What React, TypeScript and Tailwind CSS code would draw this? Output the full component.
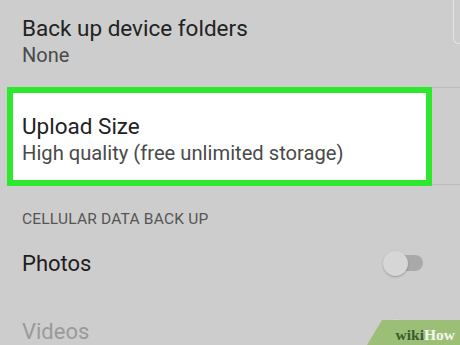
import React from 'react';

const Toggle: React.FC = () => (
  <div className="relative flex h-[25px] w-[40px] items-center">
    <div className="ml-[6px] h-[16px] w-[34px] rounded-full bg-[#a9a9a9]" />
    <div className="absolute left-0 top-0 h-[25px] w-[25px] rounded-full bg-[#d6d6d6] shadow-[0_1px_2px_rgba(0,0,0,0.25)]" />
  </div>
);

const WikiHowMark: React.FC = () => (
  <div className="absolute bottom-0 right-0 h-[25px] w-[93px]">
    <svg className="absolute inset-0" width="93" height="25" viewBox="0 0 93 25">
      <polygon points="15,0 93,0 93,25 0,25" fill="#9cbf78" />
    </svg>
    <span
      className="absolute bottom-[3px] right-[5px] text-[15.5px] font-bold leading-none"
      style={{ fontFamily: '"Liberation Serif", "DejaVu Serif", serif' }}
    >
      <span className="text-[#3e5b2c]">wiki</span>
      <span className="text-[#f2f6ee]">How</span>
    </span>
  </div>
);

export default function App() {
  return (
    <div
      className="relative h-[345px] w-[460px] overflow-hidden bg-[#cdcdcd]"
      style={{ fontFamily: 'Roboto, "Noto Sans", sans-serif' }}
    >
      {/* edge of the panel at top right */}
      <div className="absolute right-[-20px] top-[-10px] h-[54px] w-[27px] rounded-bl-[6px] border-b border-l border-[#e4e4e4]" />

      <div className="flex h-[87px] flex-col pl-[22px] pt-[14px]">
        <div className="text-[22.5px] leading-[28px] text-[#222]">Back up device folders</div>
        <div className="text-[20px] leading-[26px] text-[#4a4a4a]">None</div>
      </div>

      <div className="flex">
        <div className="ml-[7px] flex h-[99px] w-[425px] flex-col border-[6px] border-[#2ee82e] bg-white pl-[9px] pt-[19px]">
          <div className="text-[22.5px] leading-[28px] text-[#222]">Upload Size</div>
          <div className="text-[20.2px] leading-[26px] text-[#4a4a4a]">High quality (free unlimited storage)</div>
        </div>
        <div className="flex flex-1 flex-col justify-between">
          <div className="h-px bg-[#bcbcbc]" />
          <div className="mb-[1px] h-px bg-[#bcbcbc]" />
        </div>
      </div>

      <div className="pl-[22px] pt-[24px] text-[15.5px] leading-[18px] tracking-[0.2px] text-[#555]">
        CELLULAR DATA BACK UP
      </div>

      <div className="flex h-[70px] items-center justify-between pl-[22px] pr-[37px]">
        <div className="text-[22px] text-[#1e1e1e]">Photos</div>
        <Toggle />
      </div>

      <div className="flex h-[66px] items-center justify-between pl-[22px] pr-[37px]">
        <div className="text-[22px] text-[#9a9a9a]">Videos</div>
        <Toggle />
      </div>

      <WikiHowMark />
    </div>
  );
}
